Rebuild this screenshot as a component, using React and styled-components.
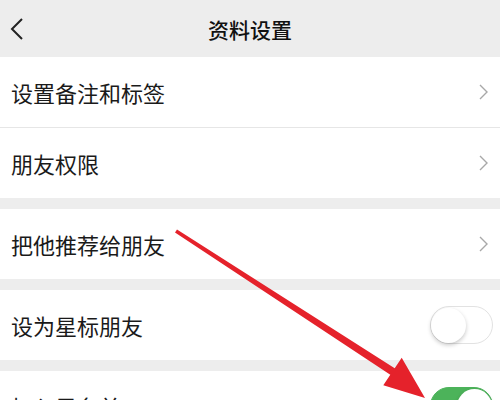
import React from "react";
import styled, { createGlobalStyle } from "styled-components";

const Global = createGlobalStyle`
  html, body { margin: 0; padding: 0; background: #ededed; }
  body { font-family: "Noto Sans CJK SC", "Noto Sans", sans-serif; overflow: hidden; }
`;

const Page = styled.div`
  position: relative;
  width: 500px;
  height: 400px;
  overflow: hidden;
  background: #ededed;
`;

const Header = styled.div`
  height: 57px;
  display: grid;
  grid-template-columns: 60px 1fr 60px;
  align-items: center;
  background: #ededed;
`;

const Back = styled.div`
  display: flex;
  align-items: center;
  padding-left: 10px;
`;

const Title = styled.div`
  text-align: center;
  font-size: 21px;
  font-weight: 500;
  color: #111;
`;

const Group = styled.div`
  background: #fff;
  margin-top: ${(p) => (p.$first ? "0" : "11px")};
`;

const Row = styled.div`
  position: relative;
  height: 70px;
  display: flex;
  align-items: center;
  justify-content: space-between;
  padding: 0 10px 0 11px;
  box-sizing: border-box;
  & + & { border-top: 1px solid #e6e6e6; height: 71px; }
`;

const Label = styled.span`
  font-size: 22px;
  color: #1a1a1a;
`;

const Toggle = styled.div`
  width: 63px;
  height: 38px;
  border-radius: 19px;
  box-sizing: border-box;
  border: 1.5px solid ${(p) => (p.$on ? "#4cb35a" : "#e2e2e2")};
  background: ${(p) => (p.$on ? "#4cb35a" : "#fff")};
  display: flex;
  justify-content: ${(p) => (p.$on ? "flex-end" : "flex-start")};
  align-items: center;
  margin-right: -3px;
`;

const Knob = styled.div`
  width: 35px;
  height: 35px;
  border-radius: 50%;
  background: #fff;
  box-shadow: 0 2px 4px rgba(0, 0, 0, 0.22);
`;

const Overlay = styled.svg`
  position: absolute;
  left: 0;
  top: 0;
  pointer-events: none;
`;

const Chevron = () => (
  <svg width="12" height="18" viewBox="0 0 12 18">
    <path d="M2 2 L9 9 L2 16" fill="none" stroke="#a8a8a8" strokeWidth="1.4" />
  </svg>
);

export default function App() {
  return (
    <Page>
      <Global />
      <Header>
        <Back>
          <svg width="16" height="24" viewBox="0 0 16 24">
            <path d="M12 2 L2 12 L12 22" fill="none" stroke="#222" strokeWidth="2" />
          </svg>
        </Back>
        <Title>资料设置</Title>
        <div />
      </Header>
      <Group $first>
        <Row>
          <Label>设置备注和标签</Label>
          <Chevron />
        </Row>
        <Row>
          <Label>朋友权限</Label>
          <Chevron />
        </Row>
      </Group>
      <Group>
        <Row>
          <Label>把他推荐给朋友</Label>
          <Chevron />
        </Row>
      </Group>
      <Group>
        <Row>
          <Label>设为星标朋友</Label>
          <Toggle>
            <Knob />
          </Toggle>
        </Row>
      </Group>
      <Group>
        <Row>
          <Label>加入黑名单</Label>
          <Toggle $on>
            <Knob />
          </Toggle>
        </Row>
      </Group>
      <Overlay width="500" height="400" viewBox="0 0 500 400">
        <polygon
          points="177,229.5 394.7,368.2 401.7,357.8 425,398 383.3,385.2 390.3,374.8 175,232.5"
          fill="#e5222b"
        />
      </Overlay>
    </Page>
  );
}
